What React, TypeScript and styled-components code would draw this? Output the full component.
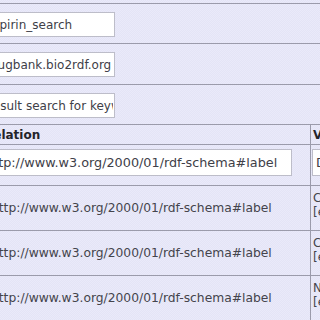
import React from "react";
import styled, { createGlobalStyle } from "styled-components";

const Global = createGlobalStyle`
  html, body { margin: 0; padding: 0; background: #e7e7f8; }
  body { overflow: hidden; width: 320px; height: 320px; }
`;

const Page = styled.div`
  width: 320px;
  height: 320px;
  overflow: hidden;
  padding-top: 3px;
  box-sizing: border-box;
  background-color: #e7e7f8;
  background-image: repeating-conic-gradient(#e4e4f6 0% 25%, #eaeafa 0% 50%);
  background-size: 2px 2px;
  font-family: "DejaVu Sans", Verdana, sans-serif;
  font-size: 12px;
  color: #3d3d44;
`;

const FormSection = styled.div`
  border-top: 1px solid #9b9bab;
`;

const FormRow = styled.div<{ $h: number }>`
  border-bottom: 1px solid #9b9bab;
  padding-top: 8px;
  box-sizing: border-box;
  height: ${(p) => p.$h + 1}px;
`;

const FieldInput = styled.input`
  display: block;
  margin-left: -20px;
  width: 135px;
  height: 25px;
  box-sizing: border-box;
  padding: 0 1px 0 4px;
  border: 1px solid #bdbdc9;
  background: #ffffff;
  font-family: "DejaVu Sans", Verdana, sans-serif;
  font-size: 12px;
  color: #404048;
  outline: none;
`;

const Table = styled.div`
  display: grid;
  grid-template-columns: 331px 60px;
  margin-left: -20px;
  font-size: 12.3px;
`;

const Cell = styled.div<{ $h: number; $first?: boolean; $top?: boolean }>`
  height: ${(p) => p.$h + 1}px;
  box-sizing: border-box;
  border-bottom: 1px solid #9b9bab;
  border-right: ${(p) => (p.$first ? "1px solid #9b9bab" : "none")};
  display: flex;
  flex-direction: column;
  justify-content: ${(p) => (p.$top ? "flex-start" : "center")};
  overflow: hidden;
  white-space: nowrap;
`;

const HeadText = styled.span<{ $pad: number }>`
  font-weight: bold;
  font-size: 12px;
  color: #24242a;
  padding-left: ${(p) => p.$pad}px;
`;

const RelText = styled.span`
  padding-left: 11px;
  color: #44444c;
`;

const ValueLines = styled.div`
  padding: 5px 0 0 2px;
  font-size: 12px;
  line-height: 14px;
  color: #44444c;
`;

const RelInput = styled.input`
  display: block;
  margin: 0 0 0 1px;
  width: 311px;
  height: 27px;
  box-sizing: border-box;
  padding: 0 2px 0 3px;
  border: 1px solid #bdbdc9;
  background: #ffffff;
  font-family: "DejaVu Sans", Verdana, sans-serif;
  font-size: 12.8px;
  color: #404048;
  outline: none;
`;

const ValInput = styled(RelInput)`
  margin-left: 1px;
  width: 120px;
`;

const InputCell = styled(Cell)`
  justify-content: flex-start;
  padding-top: 4px;
`;

const URL = "http://www.w3.org/2000/01/rdf-schema#label";

const rows = [
  { a: "Chemical compound", b: "[en]" },
  { a: "Cyclooxygenase", b: "[en]" },
  { a: "NSAID", b: "[en]" },
];

export default function App() {
  return (
    <Page>
      <Global />
      <FormSection>
        <FormRow $h={39}>
          <FieldInput readOnly value="Aspirin_search" />
        </FormRow>
        <FormRow $h={40}>
          <FieldInput readOnly value="drugbank.bio2rdf.org" />
        </FormRow>
        <FormRow $h={39}>
          <FieldInput readOnly value="Result search for keyword" />
        </FormRow>
      </FormSection>
      <Table>
        <Cell $h={19} $first>
          <HeadText $pad={4}>Relation</HeadText>
        </Cell>
        <Cell $h={19}>
          <HeadText $pad={2}>Value</HeadText>
        </Cell>
        <InputCell $h={40} $first>
          <RelInput readOnly value={URL} />
        </InputCell>
        <InputCell $h={40}>
          <ValInput readOnly value="Drug label" />
        </InputCell>
        {rows.map((r, i) => (
          <React.Fragment key={i}>
            <Cell $h={44} $first>
              <RelText>{URL}</RelText>
            </Cell>
            <Cell $h={44} $top>
              <ValueLines>
                <div>{r.a}</div>
                <div>{r.b}</div>
              </ValueLines>
            </Cell>
          </React.Fragment>
        ))}
      </Table>
    </Page>
  );
}
